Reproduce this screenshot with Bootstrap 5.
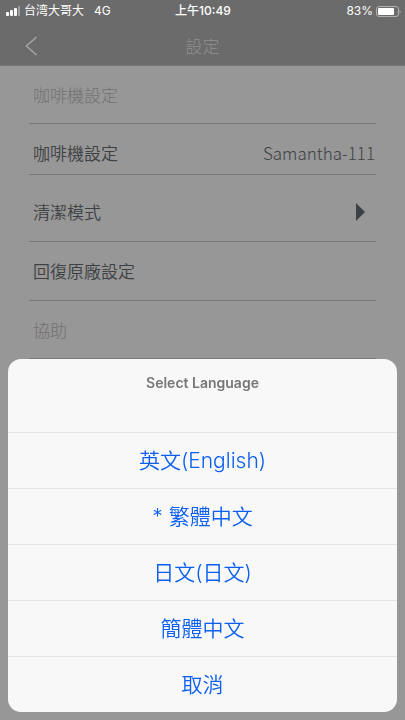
<!DOCTYPE html>
<html lang="zh-Hant">
<head>
<meta charset="utf-8">
<meta name="viewport" content="width=device-width, initial-scale=1">
<title>設定</title>
<link href="https://cdn.jsdelivr.net/npm/bootstrap@5.3.0/dist/css/bootstrap.min.css" rel="stylesheet">
<style>
  body { background: #979797; color: #3e4143; font-family: "Noto Sans CJK TC", sans-serif; font-weight: 300; font-size: 17px; line-height: 24px; }
  .top-area { background: #6b6b6b; border-bottom: 1px solid #777; }
  .status-bar { height: 21px; padding: 1px 4px 0 5px; color: #fff; font-family: Inter, "Noto Sans CJK TC", sans-serif; font-size: 12px; line-height: 20px; font-weight: 400; }
  .status-time { font-weight: 500; }
  .network-type { margin-left: 10px; }
  .charge-level { margin-right: 3px; }
  .title-bar { height: 44px; padding: 5px 24px 0; color: #909090; }
  .title-bar h1 { font-size: 17px; line-height: 24px; font-weight: 300; }
  .setting-list { margin: 0 29px; }
  .setting-row { min-height: 59px; padding: 0 0 0 4px; background: transparent; color: inherit; font-weight: 350; border: 0 solid #777; border-bottom-width: 1px; border-radius: 0; }
  .row-heading { color: #717171; font-weight: 300; }
  .row-first { min-height: 58px; }
  .row-name { min-height: 51px; padding-top: 8px; padding-right: 1px; }
  .machine-name { font-weight: 300; }
  .row-clean { min-height: 67px; padding-top: 8px; padding-right: 10px; }
  .action-sheet { margin: 0 8px 8px; background: #f8f8f8; border-radius: 13px; }
  .sheet-title { height: 73px; padding-top: 14px; color: #777; font-family: Inter, sans-serif; font-size: 14px; line-height: 20px; font-weight: 600; }
  .sheet-action { height: 56px; border: 0; border-top: 1px solid #e4e4e4; background: transparent; color: #0a5ff0; font-size: 21px; line-height: 30px; font-weight: 350; font-family: Inter, "Noto Sans CJK TC", sans-serif; }
</style>
<script src="https://cdn.jsdelivr.net/npm/bootstrap@5.3.0/dist/js/bootstrap.bundle.min.js"></script>
</head>
<body class="overflow-hidden">
<header class="top-area">
  <div class="status-bar row g-0 align-items-center">
    <div class="col d-flex align-items-center">
      <svg class="me-1" width="15" height="10" viewBox="0 0 15 10" fill="#fff" aria-hidden="true"><rect x="1" y="6" width="3" height="4" rx="1"/><rect x="5" y="4" width="3" height="6" rx="1"/><rect x="9" y="2" width="3" height="8" rx="1"/><rect x="13" y="0" width="3" height="10" rx="1" opacity=".35"/></svg>
      <span>台湾大哥大</span><span class="network-type">4G</span>
    </div>
    <div class="col-auto status-time">上午10:49</div>
    <div class="col d-flex align-items-center justify-content-end">
      <span class="charge-level">83%</span>
      <svg width="25" height="11" viewBox="0 0 25 11" aria-hidden="true"><rect x=".5" y=".5" width="22" height="10" rx="2.5" fill="none" stroke="#b0b0b0"/><rect x="2" y="2" width="16" height="7" rx="1" fill="#fff"/><path d="M23.6 3.7c1.3.4 1.3 3.2 0 3.6z" fill="#b0b0b0"/></svg>
    </div>
  </div>
  <nav class="title-bar row g-0 align-items-center" aria-label="設定">
    <div class="col d-flex">
      <button type="button" class="btn p-0 border-0 d-flex" aria-label="返回"><svg width="14" height="20" viewBox="0 0 14 20" fill="none" stroke="#a4a4a4" stroke-width="1.5"><path d="M12.5 1 2.5 10l10 9"/></svg></button>
    </div>
    <h1 class="col-auto mb-0">設定</h1>
    <div class="col"></div>
  </nav>
</header>

<main class="setting-list d-flex flex-column">
  <div class="setting-row row-heading row-first d-flex align-items-center">咖啡機設定</div>
  <div class="setting-row row-name d-flex align-items-center justify-content-between"><span>咖啡機設定</span><span class="machine-name">Samantha-111</span></div>
  <button type="button" class="setting-row row-clean d-flex align-items-center justify-content-between"><span>清潔模式</span><svg width="10" height="18" viewBox="0 0 10 18" fill="#3e4143" aria-hidden="true"><path d="M0 0l9 9-9 9z"/></svg></button>
  <button type="button" class="setting-row d-flex align-items-center">回復原廠設定</button>
  <div class="setting-row row-heading row-first d-flex align-items-center">協助</div>
</main>

<div class="fixed-bottom">
  <div class="action-sheet d-flex flex-column text-center overflow-hidden" role="dialog" aria-labelledby="sheetTitle">
    <h2 class="sheet-title mb-0" id="sheetTitle">Select Language</h2>
    <button type="button" class="sheet-action">英文(English)</button>
    <button type="button" class="sheet-action">* 繁體中文</button>
    <button type="button" class="sheet-action">日文(日文)</button>
    <button type="button" class="sheet-action">簡體中文</button>
    <button type="button" class="sheet-action">取消</button>
  </div>
</div>
</body>
</html>
